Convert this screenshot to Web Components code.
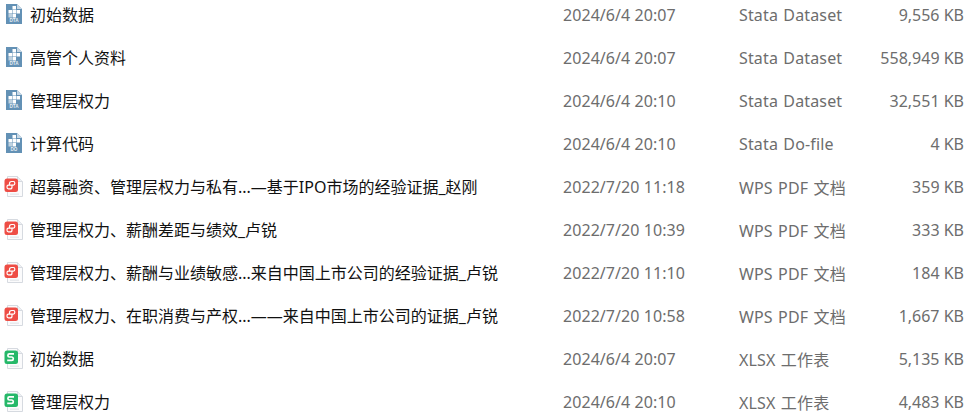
<!DOCTYPE html>
<html lang="zh">
<head>
<meta charset="utf-8">
<title>文件列表</title>
<style>
    html, body { margin: 0; padding: 0; background: #ffffff; overflow: hidden; height: 414px; }
    body { font-family: "Noto Sans", "Noto Sans CJK SC", sans-serif; }
</style>
</head>
<body>
<file-list>
    <file-row kind="dta" label="DTA" name="初始数据" date="2024/6/4 20:07" type="Stata Dataset" size="9,556 KB"></file-row>
    <file-row kind="dta" label="DTA" name="高管个人资料" date="2024/6/4 20:07" type="Stata Dataset" size="558,949 KB"></file-row>
    <file-row kind="dta" label="DTA" name="管理层权力" date="2024/6/4 20:10" type="Stata Dataset" size="32,551 KB"></file-row>
    <file-row kind="dta" label="DO" name="计算代码" date="2024/6/4 20:10" type="Stata Do-file" size="4 KB"></file-row>
    <file-row kind="pdf" name="超募融资、管理层权力与私有...—基于IPO市场的经验证据_赵刚" date="2022/7/20 11:18" type="WPS PDF 文档" size="359 KB"></file-row>
    <file-row kind="pdf" name="管理层权力、薪酬差距与绩效_卢锐" date="2022/7/20 10:39" type="WPS PDF 文档" size="333 KB"></file-row>
    <file-row kind="pdf" name="管理层权力、薪酬与业绩敏感...来自中国上市公司的经验证据_卢锐" date="2022/7/20 11:10" type="WPS PDF 文档" size="184 KB"></file-row>
    <file-row kind="pdf" name="管理层权力、在职消费与产权...——来自中国上市公司的证据_卢锐" date="2022/7/20 10:58" type="WPS PDF 文档" size="1,667 KB"></file-row>
    <file-row kind="xlsx" name="初始数据" date="2024/6/4 20:07" type="XLSX 工作表" size="5,135 KB"></file-row>
    <file-row kind="xlsx" name="管理层权力" date="2024/6/4 20:10" type="XLSX 工作表" size="4,483 KB"></file-row>
</file-list>

<script>
class FileIcon extends HTMLElement {
    connectedCallback() {
        const kind = this.getAttribute('kind')
        const label = this.getAttribute('label') || ''
        this.attachShadow({ mode: 'open' })
        let art = ''
        if (kind === 'dta') {
            art = `
                <path d="M6 0H17L22 5V20H6Z" fill="#6391b5"/>
                <path d="M17 0L22 5H17Z" fill="#c8d8e5"/>
                <g fill="#ffffff">
                    <rect x="12.5" y="2" width="3.5" height="3.5"/>
                    <rect x="8.5" y="6" width="3.5" height="3.5"/>
                    <rect x="12.5" y="6" width="3.5" height="3.5"/>
                    <rect x="16.5" y="6" width="3.5" height="3.5"/>
                    <rect x="12.5" y="10" width="3.5" height="3.5"/>
                    <rect x="8.5" y="10" width="3.5" height="3.5" opacity=".6"/>
                </g>
                <text x="14" y="18.4" text-anchor="middle" font-family="Liberation Sans, sans-serif" font-size="4.6" font-weight="700" fill="#e8f0f6">${label}</text>`
        } else {
            const colour = kind === 'pdf' ? '#ee4d45' : '#25b869'
            const glyph = kind === 'pdf'
                ? '<path d="M9.5 9.2V7.6C9.5 6.2 10.4 5.5 11.5 5.5H13.4C15.3 5.5 15.3 9.2 13.4 9.2H8.4C6.5 9.2 6.5 12.9 8.4 12.9H10.2C11.3 12.9 12 12.2 12 10.9V9.2" fill="none" stroke="#fff" stroke-width="1.2"/>'
                : '<path d="M14 5.9H9.4C7.4 5.9 7.4 9 9.4 9H11.8C13.8 9 13.8 12.3 11.8 12.3H7.2" fill="none" stroke="#fff" stroke-width="1.7"/>'
            art = `
                <path d="M7.5 0.5H17.5L22.5 5.5V20.5H7.5Z" fill="#fbfbfc" stroke="#d6dae0"/>
                <path d="M17.5 0.5V5.5H22.5" fill="#eef0f3" stroke="#d6dae0"/>
                <rect x="10" y="17.5" width="9" height="1.4" fill="#e6e8ec"/>
                <rect x="4.5" y="2.5" width="13.5" height="13.5" rx="2.5" fill="${colour}"/>
                ${glyph}`
        }
        this.shadowRoot.innerHTML = `
            <style>
                :host { display: block; width: 24px; height: 22px; }
                svg { display: block; }
            </style>
            <svg width="24" height="22" viewBox="0 0 24 22" aria-hidden="true">${art}</svg>
        `
    }
}
customElements.define('file-icon', FileIcon)

class FileRow extends HTMLElement {
    connectedCallback() {
        const attr = n => this.getAttribute(n) || ''
        this.attachShadow({ mode: 'open' })
        this.shadowRoot.innerHTML = `
            <style>
                :host {
                    display: grid;
                    grid-template-columns: 30px 533px 176px 1fr auto;
                    align-items: center;
                    height: 43.1px;
                    padding-right: 5px;
                    font-size: 16px;
                    white-space: nowrap;
                }
                .name { color: #111111; margin-bottom: 2px; }
                .date, .type, .size { color: #6d6d6d; }
                .date { letter-spacing: .06px; }
                .type { letter-spacing: .15px; word-spacing: 1px; }
                .size { text-align: right; }
            </style>
            <div class="icon"><file-icon kind="${attr('kind')}" label="${attr('label')}"></file-icon></div>
            <div class="name">${attr('name')}</div>
            <div class="date">${attr('date')}</div>
            <div class="type">${attr('type')}</div>
            <div class="size">${attr('size')}</div>
        `
    }
}
customElements.define('file-row', FileRow)

class FileList extends HTMLElement {
    constructor() {
        super()
        this.attachShadow({ mode: 'open' })
        this.shadowRoot.innerHTML = `
            <style>
                :host { display: block; margin-top: -7px; }
            </style>
            <slot></slot>
        `
    }
}
customElements.define('file-list', FileList)
</script>
</body>
</html>
